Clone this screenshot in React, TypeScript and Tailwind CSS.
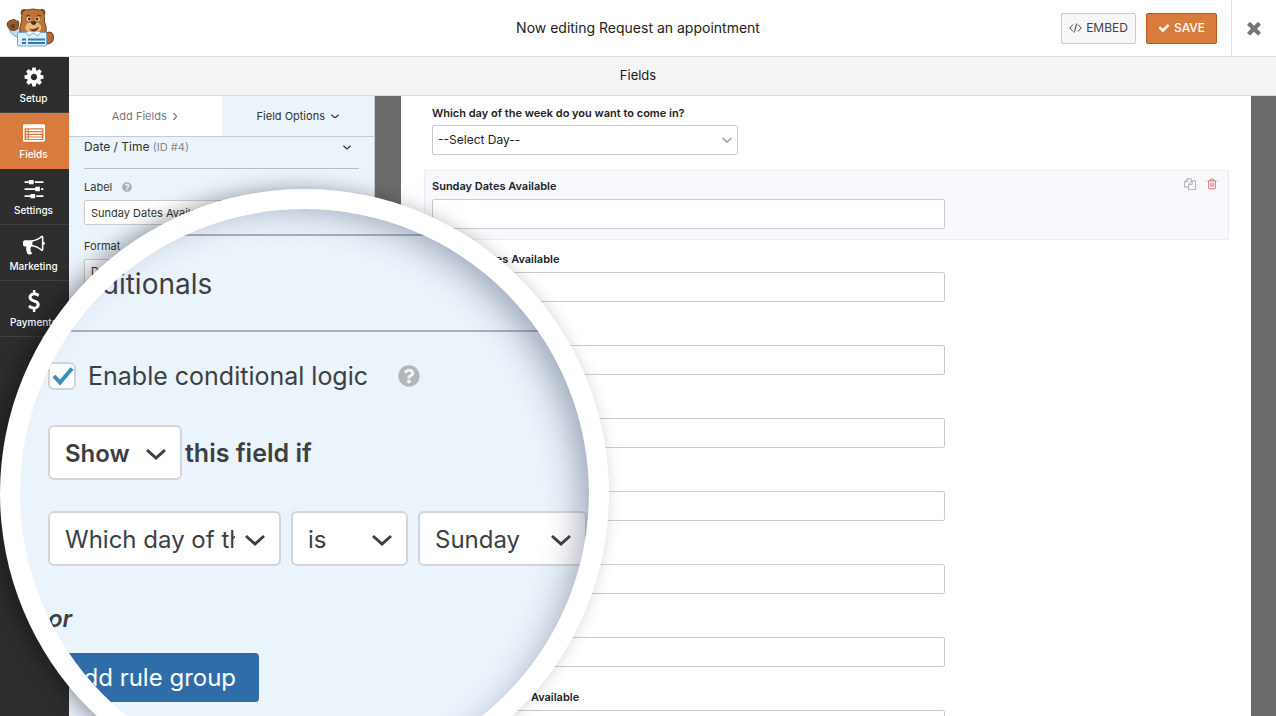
import React from 'react';
import { FaQuestionCircle } from 'react-icons/fa';

const ICONS = {
  cog: 'M1152 896q0-106-75-181t-181-75-181 75-75 181 75 181 181 75 181-75 75-181zm512-109v222q0 12-8 23t-20 13l-185 28q-19 54-39 91 35 50 107 138 10 12 10 25t-9 23q-27 37-99 108t-94 71q-12 0-26-9l-138-108q-44 23-91 38-16 136-29 186-7 28-36 28h-222q-14 0-24.5-8.5t-11.5-21.5l-28-184q-49-16-90-37l-141 107q-10 9-25 9-14 0-25-11-126-114-165-168-7-10-7-23 0-12 8-23 15-21 51-66.5t54-70.5q-27-50-41-99l-183-27q-13-2-21-12.5t-8-23.5v-222q0-12 8-23t19-13l186-28q14-46 39-92-40-57-107-138-10-12-10-24 0-10 9-23 26-36 98.5-107.5t94.5-71.5q13 0 26 10l138 107q44-23 91-38 16-136 29-186 7-28 36-28h222q14 0 24.5 8.5t11.5 21.5l28 184q49 16 90 37l142-107q9-9 24-9 13 0 25 10 129 119 165 170 7 8 7 22 0 12-8 23-15 21-51 66.5t-54 70.5q26 50 41 98l183 28q13 2 21 12.5t8 23.5z',
  list: 'M0 288q0-96 96-96h1600q96 0 96 96v1216q0 96-96 96h-1600q-96 0-96-96zM128 512v896q0 64 64 64h1408q64 0 64-64v-896zM256 608h128v128h-128zM480 608h1056v128h-1056zM256 832h128v128h-128zM480 832h1056v128h-1056zM256 1056h128v128h-128zM480 1056h1056v128h-1056zM256 1264h128v112h-128zM480 1264h1056v112h-1056z',
  sliders: 'M128 256h352v-96h384v352h-384v-112h-352zM960 256h704v144h-704zM128 832h864v-112h384v352h-384v-96h-864zM1472 832h192v144h-192zM128 1408h480v-112h384v352h-384v-96h-480zM1088 1408h576v144h-576z',
  bullhorn: 'M1664 640q53 0 90.5 37.5t37.5 90.5-37.5 90.5-90.5 37.5v384q0 52-38 90t-90 38q-417-347-812-380-58 19-91 66t-31 100.5 40 92.5q-20 33-23 65.5t6 58 33.5 55 48 50 61.5 50.5q-29 58-111.5 83t-168.5 11.5-132-55.5q-7-23-29.5-87.5t-32-94.5-23-89-15-101 3.5-98.5 22-110.5h-122q-66 0-113-47t-47-113v-192q0-66 47-113t113-47h480q435 0 896-384 52 0 90 38t38 90v384zm-128 604v-954q-394 302-768 343v270q377 42 768 341z',
  dollar: 'M1362 1185q0 153-99.5 263.5t-258.5 136.5v175q0 14-9 23t-23 9h-135q-13 0-22.5-9.5t-9.5-22.5v-175q-66-9-127.5-31t-101.5-44.5-74-48-46.5-37.5-17.5-18q-17-21-2-41l103-135q7-10 23-12 15-2 24 9l2 2q113 99 243 125 37 8 74 8 81 0 142.5-43t61.5-122q0-28-15-53t-33.5-42-58.5-37.5-66-32-80-32.5q-39-16-61.5-25t-61.5-26.5-62.5-31-56.5-35.5-53.5-42.5-43.5-49-35.5-58-21-66.5-8.5-78q0-138 98-242t255-134v-180q0-13 9.5-22.5t22.5-9.5h135q14 0 23 9t9 23v176q57 6 110.5 23t87 33.5 63.5 37.5 39 29 15 14q17 18 5 38l-81 146q-8 15-23 16-14 3-27-7-3-3-14.5-12t-39-26.5-58.5-32-74.5-26-85.5-11.5q-95 0-155 43t-60 111q0 26 8.5 48t29.5 41.5 39.5 33 56 31 60.5 27 70 27.5q53 20 81 31.5t76 35 75.5 42.5 62 50 53 63.5 31.5 76.5 13 94z',
  check: 'M1671 566q0 40-28 68l-724 724-136 136q-28 28-68 28t-68-28l-136-136-362-362q-28-28-28-68t28-68l136-136q28-28 68-28t68 28l294 295 656-657q28-28 68-28t68 28l136 136q28 28 28 68z',
  times: 'M1490 1322q0 40-28 68l-136 136q-28 28-68 28t-68-28l-294-294-294 294q-28 28-68 28t-68-28l-136-136q-28-28-28-68t28-68l294-294-294-294q-28-28-28-68t28-68l136-136q28-28 68-28t68 28l294 294 294-294q28-28 68-28t68 28l136 136q28 28 28 68t-28 68l-294 294 294 294q28 28 28 68z',
  copy: 'M1696 384q40 0 68 28t28 68v1216q0 40-28 68t-68 28h-960q-40 0-68-28t-28-68v-288h-544q-40 0-68-28t-28-68v-672q0-40 20-88t48-76l408-408q28-28 76-48t88-20h416q40 0 68 28t28 68v328q68-40 128-40h416zm-544 213l-299 299h299v-299zm-640-384l-299 299h299v-299zm196 647l316-316v-416h-384v416q0 40-28 68t-68 28h-416v640h512v-256q0-40 20-88t48-76zm956 804v-1152h-384v416q0 40-28 68t-68 28h-416v640h896z',
  trash: 'M704 736v576q0 14-9 23t-23 9h-64q-14 0-23-9t-9-23v-576q0-14 9-23t23-9h64q14 0 23 9t9 23zm256 0v576q0 14-9 23t-23 9h-64q-14 0-23-9t-9-23v-576q0-14 9-23t23-9h64q14 0 23 9t9 23zm256 0v576q0 14-9 23t-23 9h-64q-14 0-23-9t-9-23v-576q0-14 9-23t23-9h64q14 0 23 9t9 23zm128 724v-948h-896v948q0 22 7 40.5t14.5 27 10.5 8.500h832q3 0 10.5-8.5t14.5-27 7-40.5zm-672-1076h448l-48-117q-7-9-17-11h-317q-10 2-17 11zm928 32v64q0 14-9 23t-23 9h-96v948q0 83-47 143.5t-113 60.5h-832q-66 0-113-58.5t-47-141.5v-952h-96q-14 0-23-9t-9-23v-64q0-14 9-23t23-9h309l70-167q15-37 54-63t79-26h320q40 0 79 26t54 63l70 167h309q14 0 23 9t9 23z',
};

type IconName = keyof typeof ICONS;

const NAV_ITEMS: Array<{ label: string; icon: IconName }> = [
  { label: 'Setup', icon: 'cog' },
  { label: 'Fields', icon: 'list' },
  { label: 'Settings', icon: 'sliders' },
  { label: 'Marketing', icon: 'bullhorn' },
  { label: 'Payments', icon: 'dollar' },
];

const DATE_FIELDS = [
  'Sunday Dates Available',
  'Monday Dates Available',
  'Tuesday Dates Available',
  'Thursday Dates Available',
  'Friday Dates Available',
  'Saturday Dates Available',
  'Holiday Dates Available',
  'Wednesday Dates Available',
];

export default function App() {
  return (
    <div className="relative flex h-screen flex-col overflow-hidden bg-white font-[Inter,'Liberation_Sans',sans-serif] text-[#333]">
      <Header />
      <div className="flex min-h-0 flex-1">
        <Sidebar />
        <div className="flex min-w-0 flex-1 flex-col">
          <h1 className="flex h-[39px] shrink-0 items-center justify-center border-b border-[#d9d9d9] bg-[#f5f5f5] pr-[69px] text-[13px] text-[#222]">
            Fields
          </h1>
          <div className="flex min-h-0 flex-1 bg-[#6b6b6b]">
            <OptionsPanel />
            <Preview />
          </div>
        </div>
      </div>
      <Magnifier />
    </div>
  );
}

function Icon({ name, className }: { name: IconName; className: string }) {
  return (
    <svg viewBox="0 0 1792 1792" className={className} fill="currentColor" fillRule="evenodd" aria-hidden="true">
      <path d={ICONS[name]} />
    </svg>
  );
}

function Chevron({ className }: { className: string }) {
  return (
    <svg viewBox="0 0 20 12" className={className} fill="none" stroke="currentColor" strokeWidth="3" aria-hidden="true">
      <path d="M1 2 10 10 19 2" />
    </svg>
  );
}

function Header() {
  return (
    <header className="flex h-[57px] shrink-0 items-stretch border-b border-[#ddd]">
      <div className="flex flex-1 items-center">
        <BearLogo />
      </div>
      <p className="flex items-center text-sm text-[#222]">Now editing Request an appointment</p>
      <div className="flex flex-1 items-center justify-end gap-2.5">
        <button
          type="button"
          className="flex h-[31px] w-[75px] items-center justify-center gap-1 rounded-xs border border-[#ccc] bg-[#f7f7f7] text-xs text-[#444]"
        >
          <svg viewBox="0 0 13 10" className="h-2.5 w-[13px]" fill="none" stroke="currentColor" aria-hidden="true">
            <path d="M4 1.5.8 5 4 8.500M9 1.500 12.200 5 9 8.500M7.600.5 5.400 9.500" />
          </svg>
          EMBED
        </button>
        <button
          type="button"
          className="flex h-[31px] w-[71px] items-center justify-center gap-1 rounded-xs border border-[#b85a1b] bg-[#d97b3c] text-xs font-medium text-white"
        >
          <Icon name="check" className="size-3" />
          SAVE
        </button>
        <button
          type="button"
          aria-label="Close"
          className="ml-1 flex h-full w-[45px] items-center justify-center border-l border-[#ddd] text-[#777]"
        >
          <Icon name="times" className="size-5" />
        </button>
      </div>
    </header>
  );
}

function BearLogo() {
  return (
    <svg viewBox="0 0 50 40" className="ml-1.5 h-10 w-[50px]" role="img" aria-label="WPForms">
      <path d="M40 25q7-3 7.500 4t-7.500 7z" fill="#b06a35" stroke="#6d3f22" />
      <path d="M3 21q2 6 10 9l4-6-6-5z" fill="#b9dcee" stroke="#5b94b5" strokeWidth=".8" />
      <path d="M1.500 14.500q-1 3 1 5.500 2 3 6 2.500 4-1 4-5 1-4-1-5l-1.500 1q-.5-2.500-2.500-2-1.500-.5-2 1-2-1-2.500 1z" fill="#9b592b" stroke="#6b3a1d" />
      <path d="M4.500 17q2.500-2 5 0-.5 3.500-3 3.500-2 0-2-3.500z" fill="#6b3a1d" />
      <circle cx="18" cy="4.500" r="3" fill="#9a5829" stroke="#6b3a1d" />
      <circle cx="36" cy="4.500" r="3" fill="#9a5829" stroke="#6b3a1d" />
      <path d="M14 26q-1-8 1.500-12Q15 2 20 2q7-2 14 0 5 0 4.500 12 2.500 4 1.500 12z" fill="#bd7437" stroke="#7a4522" />
      <path d="M20 8q2-1.500 4-.5M31 7.500q2-1 4 .5" fill="none" stroke="#603317" />
      <ellipse cx="23" cy="11" rx="2.200" ry="2" fill="#fff" />
      <ellipse cx="31.500" cy="11" rx="2.200" ry="2" fill="#fff" />
      <circle cx="23.300" cy="11" r="1.400" fill="#35211a" />
      <circle cx="31.200" cy="11" r="1.400" fill="#35211a" />
      <path d="M19 20q1-6 8-6t8.500 5q-1 6-8.500 6.500-6 0-8-5.500z" fill="#e8ba82" />
      <path d="M24.500 14q3-1.500 6 0-.5 3-3 3-2 0-3-3z" fill="#472819" />
      <path d="M23 20.500q5 2 10-2-1 4.500-5 5-3 0-5-3z" fill="#7c3326" />
      <path d="M12.500 24.500h27q1 0 1 1V37q0 1-1 1h-27q-1 0-1-1V25.500q0-1 1-1z" fill="#ddf0f8" stroke="#72a8c5" />
      <path d="m20 24 2.500 4 4.500-3 5 3 3-4" fill="#e9f6fb" stroke="#72a8c5" strokeWidth=".8" />
      <path d="M16 31.500h4M22 31.500h17M16 35h4M22 35h17" stroke="#2d79b3" strokeWidth="1.800" />
    </svg>
  );
}

function Sidebar() {
  return (
    <nav className="w-[69px] shrink-0 bg-[#2d2d2d]">
      {NAV_ITEMS.map(item => (
        <a
          key={item.label}
          href="#"
          className={`flex h-14 flex-col items-center gap-0.5 border-b pt-[9px] pr-0.5 text-[10px] leading-4 font-medium text-white ${
            item.label === 'Fields' ? 'border-[#d97b3c] bg-[#d97b3c]' : 'border-[#404040]'
          }`}
        >
          <Icon name={item.icon} className="size-[22px] shrink-0" />
          {item.label}
        </a>
      ))}
    </nav>
  );
}

function OptionsPanel() {
  return (
    <section className="w-[306px] shrink-0 border-r border-[#c5cad3] bg-[#ebf3fb]">
      <div className="grid h-[41px] grid-cols-2 border-b border-[#c5cad3] text-[11px]">
        <button type="button" className="flex items-center justify-center gap-1 bg-white text-[#777]">
          Add Fields
          <Chevron className="w-2 -rotate-90" />
        </button>
        <button type="button" className="flex items-center justify-center gap-1.5 text-[#333]">
          Field Options
          <Chevron className="w-2" />
        </button>
      </div>
      <div className="px-[15px] text-[11px]">
        <h2 className="flex h-8 items-start justify-between border-b border-[#b8bec9] pt-0.5 pr-2 text-xs">
          <span>
            Date / Time <span className="text-[11px] text-[#888]">(ID #4)</span>
          </span>
          <Chevron className="mt-1.5 w-2" />
        </h2>
        <label htmlFor="field-label" className="mt-2.5 flex h-4 items-center gap-2.5">
          Label
          <FaQuestionCircle className="size-2.5 text-[#a9aeb8]" />
        </label>
        <input
          id="field-label"
          defaultValue="Sunday Dates Available"
          className="mt-[5px] block h-[25px] w-full rounded-xs border border-[#ccc] bg-white px-1.5"
        />
        <label htmlFor="field-format" className="mt-[13px] block h-4 leading-4">
          Format
        </label>
        <select id="field-format" className="mt-[5px] block h-[25px] w-full appearance-none rounded-xs border border-[#ccc] bg-white px-1.5">
          <option>Date</option>
        </select>
      </div>
    </section>
  );
}

function Preview() {
  return (
    <main className="mr-[25px] ml-[26px] min-w-0 flex-1 bg-white pr-[22px] pl-[23px] text-[11px] text-[#222]">
      <div className="h-[74px] px-2 pt-[9px]">
        <label htmlFor="weekday" className="block h-5 leading-4 font-semibold">
          Which day of the week do you want to come in?
        </label>
        <div className="relative w-[306px]">
          <select
            id="weekday"
            className="block h-[30px] w-full appearance-none rounded-xs border border-[#ccc] bg-white px-[5px] text-xs"
          >
            <option>--Select Day--</option>
          </select>
          <Chevron className="pointer-events-none absolute top-3 right-1.5 w-2.5 text-[#999]" />
        </div>
      </div>
      <div className="flex flex-col gap-[3px]">
        {DATE_FIELDS.map((label, index) => (
          <DateField key={label} id={`date-${index}`} label={label} selected={index === 0} />
        ))}
      </div>
    </main>
  );
}

function DateField({ id, label, selected }: { id: string; label: string; selected: boolean }) {
  return (
    <div className={`h-[70px] border pr-2 pl-[7px] pt-[7px] ${selected ? 'border-[#ececf4] bg-[#f7f9fd]' : 'border-transparent'}`}>
      <div className="flex h-[21px] items-start justify-between">
        <label htmlFor={id} className="leading-4 font-semibold">
          {label}
        </label>
        {selected ? (
          <div className="flex items-start gap-2.5 pr-0.5">
            <button type="button" aria-label="Duplicate field" className="text-[#aaa]">
              <Icon name="copy" className="size-3" />
            </button>
            <button type="button" aria-label="Delete field" className="text-[#dc7472]">
              <Icon name="trash" className="size-3" />
            </button>
          </div>
        ) : null}
      </div>
      <input id={id} className="block h-[30px] w-[513px] rounded-xs border border-[#ccc] bg-white px-2" />
    </div>
  );
}

// Enlarged view of the conditional logic options, laid over the builder
function Magnifier() {
  return (
    <div className="absolute top-[189px] left-0 size-[609px] rounded-full bg-white p-5 shadow-[-8px_0_20px_rgba(0,0,0,0.35)]">
      <section className="relative size-full overflow-hidden rounded-full bg-[#ebf3fb] pt-[25px] text-2xl text-[#3c3f43]">
        <h2 className="flex h-[98px] items-center border-y-2 border-[#a9afba] pt-1 pl-7 text-[28px]">Conditionals</h2>
        <div className="pl-7">
          <div className="mt-7 flex h-8 items-center">
            <div className="relative size-7">
              <input
                id="enable-logic"
                type="checkbox"
                defaultChecked
                className="block size-7 appearance-none rounded-md border-2 border-[#d2d4d6] bg-white"
              />
              <svg
                viewBox="0 0 28 28"
                className="pointer-events-none absolute inset-0 size-7"
                fill="none"
                stroke="#3d8bbd"
                strokeWidth="4"
                aria-hidden="true"
              >
                <path d="m6 14 6 6.500L24 6.500" />
              </svg>
            </div>
            <label htmlFor="enable-logic" className="pt-0.5 pl-3 text-[25px]">
              Enable conditional logic
            </label>
            <FaQuestionCircle className="ml-[30px] size-[22px] text-[#b3b5b8]" />
          </div>
          <div className="mt-[33px] flex items-center gap-[3px] font-semibold">
            <LogicSelect label="Action" value="Show" className="w-[134px]" />
            <span className="pt-0.5 text-[25px]">this field if</span>
          </div>
          <div className="mt-[31px] flex gap-2.5">
            <LogicSelect label="Field" value="Which day of the week do you want to come in?" className="w-[233px]" />
            <LogicSelect label="Operator" value="is" className="w-[117px]" />
            <LogicSelect label="Value" value="Sunday" className="w-[169px]" />
          </div>
          <p className="mt-[37px] h-[50px] leading-8 font-semibold italic">or</p>
          <button type="button" className="h-[49px] w-[211px] rounded-sm bg-[#2f6da9] pr-1 text-white">
            Add rule group
          </button>
        </div>
        <div className="pointer-events-none absolute inset-0 rounded-full shadow-[inset_-24px_14px_34px_-16px_rgba(60,70,100,0.45)]" />
      </section>
    </div>
  );
}

function LogicSelect({ label, value, className }: { label: string; value: string; className: string }) {
  return (
    <div className={`relative shrink-0 ${className}`}>
      <select
        aria-label={label}
        className="block h-[55px] w-full appearance-none rounded-md border-2 border-[#d3d5d8] bg-white pt-0.5 pr-11 pl-[15px]"
      >
        <option>{value}</option>
      </select>
      <Chevron className="pointer-events-none absolute top-[23px] right-4 w-5" />
    </div>
  );
}
